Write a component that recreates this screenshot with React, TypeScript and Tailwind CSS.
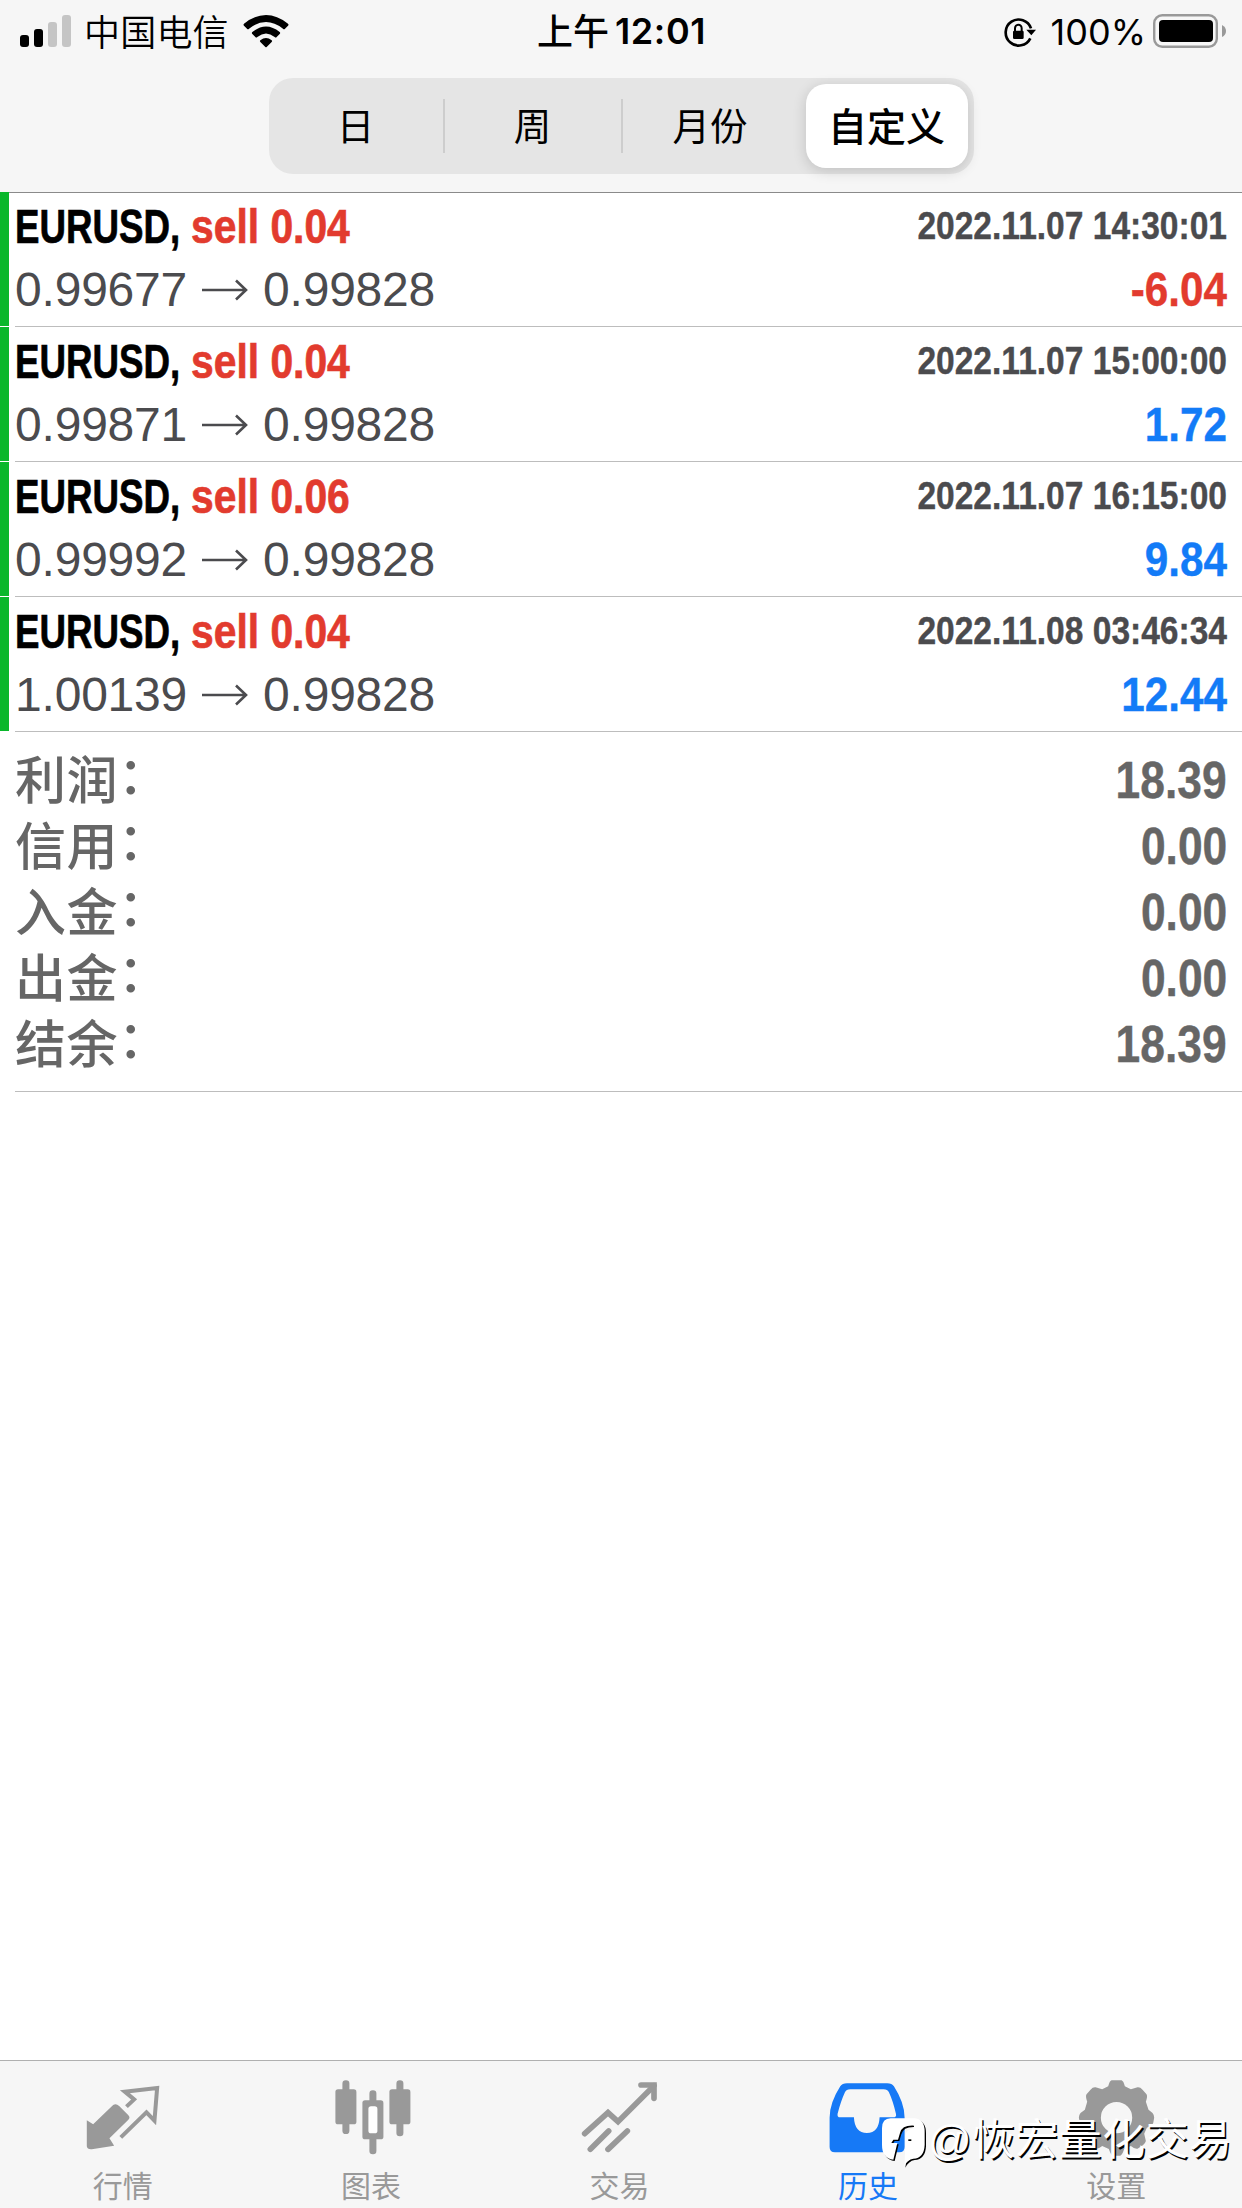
import type { ReactNode } from "react";

type Deal = { side: string; from: string; to: string; time: string; profit: string };

const deals: Deal[] = [
  { side: "sell 0.04", from: "0.99677", to: "0.99828", time: "2022.11.07 14:30:01", profit: "-6.04" },
  { side: "sell 0.04", from: "0.99871", to: "0.99828", time: "2022.11.07 15:00:00", profit: "1.72" },
  { side: "sell 0.06", from: "0.99992", to: "0.99828", time: "2022.11.07 16:15:00", profit: "9.84" },
  { side: "sell 0.04", from: "1.00139", to: "0.99828", time: "2022.11.08 03:46:34", profit: "12.44" },
];

const totals = [
  ["利润", "18.39"],
  ["信用", "0.00"],
  ["入金", "0.00"],
  ["出金", "0.00"],
  ["结余", "18.39"],
];

function StatusBar() {
  return (
    <div className="grid h-[62px] grid-cols-3 items-center pr-4 pl-5 text-[36px] leading-none">
      <div className="flex items-center">
        <svg className="h-8 w-[51px]" viewBox="0 0 51 32">
          <rect x="0" y="20" width="9" height="12" rx="3" />
          <rect x="14" y="14" width="9" height="18" rx="3" />
          <rect x="28" y="7" width="9" height="25" rx="3" fill="#c5c5c5" />
          <rect x="42" y="0" width="9" height="32" rx="3" fill="#c5c5c5" />
        </svg>
        <span className="ml-[13px] pt-[3px] font-[350] tracking-[0.2px]">中国电信</span>
        <svg className="ml-[14px] h-[33px] w-[46px]" viewBox="0 0 138 99">
          <path d="M3 32 Q0 29 3 26 Q69 -26 135 26 Q138 29 135 32 L126 41 Q123 44 120 41 Q69 1 18 41 Q15 44 12 41Z" />
          <path d="M28 57 Q25 54 28 51 Q69 18 110 51 Q113 54 110 57 L101 66 Q98 69 95 66 Q69 45 43 66 Q40 69 37 66Z" />
          <path d="M52 81 Q49 78 52 76 Q69 62 86 76 Q89 78 86 81 L71 96 Q69 98 67 96Z" />
        </svg>
      </div>
      <div className="flex justify-center pt-px pr-[3px] font-semibold tracking-[0.6px]">
        <span className="mr-[6px] pt-px font-medium tracking-normal">上午</span>12:01
      </div>
      <div className="flex items-center justify-end">
        <svg className="mt-[2px] h-[32px] w-[33px]" viewBox="0 0 99 96">
          <path d="M79 67 A39 39 0 1 1 81 37" fill="none" stroke="#000" strokeWidth="8" />
          <path d="M67 41 H96 L82 58Z" />
          <rect x="27" y="44" width="32" height="25" rx="4" />
          <path d="M33 45 V37 A10 11 0 0 1 53 37 V45" fill="none" stroke="#000" strokeWidth="6" />
        </svg>
        <span className="ml-[14px] pt-px">100%</span>
        <svg className="ml-[7px] h-[34px] w-[73px]" viewBox="0 0 73 34">
          <rect x="1.2" y="1.2" width="62.6" height="31.6" rx="8" fill="none" stroke="#999" strokeWidth="2.4" />
          <rect x="6" y="6" width="54" height="22" rx="4" />
          <path d="M69 11 Q73 13 73 17 Q73 21 69 23Z" fill="#999" />
        </svg>
      </div>
    </div>
  );
}

function Segments() {
  return (
    <div className="mx-auto mt-4 flex h-24 w-[705px] items-center rounded-[24px] bg-[#e5e5e5] text-[37.5px]">
      <div className="w-[174px] pt-[3px] text-center">日</div>
      <div className="h-[54px] w-[2px] bg-[#cdcdcd]" />
      <div className="w-[176px] pt-[3px] text-center">周</div>
      <div className="h-[54px] w-[2px] bg-[#cdcdcd]" />
      <div className="w-[177px] pt-[3px] pr-[2px] text-center">月份</div>
      <div className="ml-[6px] flex h-[84px] w-[162px] items-center justify-center rounded-[20px] bg-white pt-[3px] text-[39px] font-medium shadow-[0_3px_14px_rgba(0,0,0,0.16)]">
        自定义
      </div>
    </div>
  );
}

function DealRow({ deal }: { deal: Deal }) {
  const loss = deal.profit.startsWith("-");
  return (
    <div className="flex h-[135px]">
      <div className="mb-px w-[9px] bg-[#09b72b]" />
      <div className="ml-[6px] flex flex-1 justify-between border-b border-[#bdbdbd] pr-[15px]">
        <div>
          <div className="flex h-[68px] items-center pt-[2px] text-[48px] font-bold whitespace-nowrap [-webkit-text-stroke:0.7px]">
            <span className="w-[176px] origin-left scale-x-[0.765]">EURUSD,</span>
            <span className="origin-left scale-x-[0.85] text-[#e23b2e]">{deal.side}</span>
          </div>
          <div className="flex h-[60px] items-center text-[48px] tracking-[-0.2px] text-[#4b4b4e]">
            <span className="w-[187px]">{deal.from}</span>
            <svg className="h-[22px] w-[46px]" viewBox="0 0 46 22" fill="none" stroke="#4b4b4e" strokeWidth="2.6">
              <path d="M0 11 H44 M34 1.5 L44 11 L34 20.5" />
            </svg>
            <span className="ml-[15px]">{deal.to}</span>
          </div>
        </div>
        <div className="text-right font-bold [-webkit-text-stroke:0.4px]">
          <div className="flex h-[68px] origin-right scale-x-[0.86] items-center justify-end text-[39px] text-[#4b4b4e]">{deal.time}</div>
          <div className={`flex h-[60px] origin-right scale-x-[0.88] items-center justify-end text-[48px] ${loss ? "text-[#e23b2e]" : "text-[#137bf7]"}`}>{deal.profit}</div>
        </div>
      </div>
    </div>
  );
}

function Tab({ label, box, active, children }: { label: string; box: string; active?: boolean; children: ReactNode }) {
  return (
    <div className={`flex flex-1 flex-col items-center pt-4 ${active ? "text-[#1679f6]" : "text-[#999999]"}`}>
      <svg className="size-20" viewBox={box} fill="currentColor">{children}</svg>
      <span className="mt-[15px] mr-[3px] text-[30px] leading-[30px]">{label}</span>
    </div>
  );
}

const bubble =
  "M62 40 H132 Q164 42 164 80 V120 Q162 160 130 161 Q112 164 102 184 L104 170 L106 110 V92 Q108 74 132 70 V62 Q96 60 90 84 L84 104 H70 L64 114 H82 L70 164 Q36 160 36 120 V70 Q36 40 62 40Z";

function Watermark() {
  return (
    <div className="absolute top-[2112px] left-[881px] flex items-center text-white">
      <svg className="h-[56px] w-[46px]" viewBox="33 21 138 168">
        <path d={bubble} transform="translate(4 4)" />
        <path d={bubble} fill="#fff" />
        <rect x="115" y="103" width="9" height="5" />
      </svg>
      <span className="ml-px text-[43px] leading-[56px] tracking-[0.4px] whitespace-nowrap [text-shadow:1.5px_1.5px_0_#000]">@恢宏量化交易</span>
    </div>
  );
}

export default function App() {
  return (
    <div className="relative flex h-[2208px] w-[1242px] flex-col overflow-hidden bg-white font-['Liberation_Sans','Noto_Sans_CJK_SC',sans-serif] text-black">
      <header className="h-[193px] border-b border-[#8a8a8a] bg-[#f6f6f6] font-['Inter','Noto_Sans_CJK_SC',sans-serif]">
        <StatusBar />
        <Segments />
      </header>
      <main className="-mt-px flex-1">
        {deals.map((d) => <DealRow key={d.time} deal={d} />)}
        <section className="ml-[15px] h-[360px] border-b border-[#bdbdbd] pt-[16px] pr-[15px] text-[51px] text-[#666666]">
          {totals.map(([label, value]) => (
            <div key={label} className="flex h-[66px] items-center justify-between">
              <span className="flex pt-[2px] font-medium tracking-[0.5px]">
                {label}
                <span className="-mt-[5px]">：</span>
              </span>
              <span className="origin-right scale-x-[0.87] font-bold [-webkit-text-stroke:0.4px]">{value}</span>
            </div>
          ))}
        </section>
      </main>
      <nav className="flex h-[148px] border-t border-[#b0b0b0] bg-[#f6f6f6]">
        <Tab label="行情" box="252.6 80 240 240">
          <path d="M261 210 L280 222 L340 164 Q349 158 358 167 L385 194 Q393 202 385 209 L329 264 L343 286 L276 297 Q262 298 261 288Z" />
          <path d="M380 169 L403 147 L375 124 L472 113 L464 211 L440 186 L363 261" fill="none" stroke="currentColor" strokeWidth="12" />
        </Tab>
        <Tab label="图表" box="997.8 80 240 240">
          <rect x="1005" y="117" width="63" height="105" rx="8" />
          <rect x="1026" y="90" width="21" height="161" rx="10" />
          <rect x="1167" y="117" width="63" height="105" rx="8" />
          <rect x="1188" y="90" width="21" height="168" rx="10" />
          <rect x="1107" y="120" width="21" height="192" rx="10" />
          <rect x="1086" y="150" width="63" height="117" rx="8" />
          <rect x="1104" y="168" width="27" height="81" rx="8" fill="#fff" />
        </Tab>
        <Tab label="交易" box="123 80 240 240">
          <g fill="none" stroke="currentColor" strokeWidth="17" strokeLinecap="round">
            <path d="M134 250 L204 187 L234 214 L342 106" />
            <path d="M303 104 H342 V144" />
            <path d="M151 297 L206 242 M204 297 L262 242" />
          </g>
        </Tab>
        <Tab label="历史" box="868.2 80 240 240" active>
          <path fillRule="evenodd" d="M922 99 H1043 Q1057 99 1063 108 Q1095 158 1095 202 V290 Q1095 306 1079 306 H886 Q870 306 870 290 V202 Q870 158 902 108 Q908 99 922 99Z M932 117 Q920 117 916 126 Q904 152 894 190 Q892 201 902 201 H943 Q945 248 982 248 Q1018 248 1020 201 H1060 Q1072 201 1069 190 Q1060 152 1048 126 Q1044 117 1032 117Z" />
        </Tab>
        <Tab label="设置" box="773.4 80 240 240">
          <path fillRule="evenodd" d="M874 90 H904 Q910 92 914 108 L932 117 L952 111 Q960 110 967 118 L979 132 Q983 138 977 154 L985 178 L997 188 Q1002 194 1002 202 L999 218 Q998 224 980 232 L972 250 L977 272 Q975 280 968 285 L952 295 Q944 297 932 287 L912 296 Q906 314 900 316 H878 Q872 314 866 296 L846 287 Q834 297 826 295 L810 285 Q802 280 801 272 L806 250 L798 232 Q780 224 779 218 L776 202 Q776 194 781 188 L794 178 L801 154 Q795 138 799 132 L811 118 Q818 110 826 111 L846 117 L864 108 Q868 92 874 90Z M889 155 A47 47 0 1 0 889 249 A47 47 0 1 0 889 155Z" />
        </Tab>
      </nav>
      <Watermark />
    </div>
  );
}
